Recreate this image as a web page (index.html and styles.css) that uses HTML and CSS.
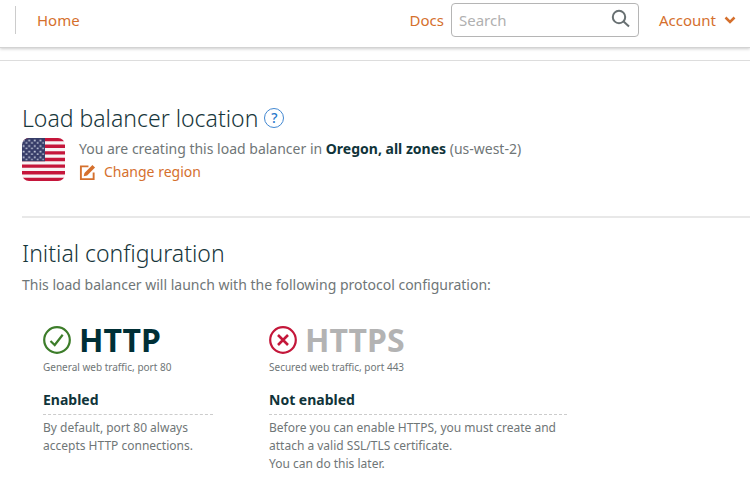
FILE: index.html
```html
<!DOCTYPE html>
<html lang="en">
<head>
<meta charset="utf-8">
<title>Create a load balancer</title>
<link rel="stylesheet" href="styles.css">
</head>
<body>
<header class="topbar">
  <nav class="nav-main"><a href="#">Home</a></nav>
  <nav class="nav-tools">
    <a href="#">Docs</a>
    <div class="search">
      <input type="search" placeholder="Search" aria-label="Search">
      <svg class="search-icon" viewBox="0 0 20 20" aria-hidden="true"><circle cx="8" cy="8" r="6.2"/><path d="M12.6 12.6 18 17.6"/></svg>
    </div>
    <button class="account" type="button">Account
      <svg class="chevron" viewBox="0 0 12 8" aria-hidden="true"><path d="M1.5 1.5 6 6l4.500-4.500"/></svg>
    </button>
  </nav>
</header>
<main class="page">
  <section class="location">
    <div class="heading">
      <h2>Load balancer location</h2>
      <button class="help" type="button" aria-label="Help">?</button>
    </div>
    <div class="region">
      <svg class="flag" viewBox="0 0 43 43" role="img" aria-label="United States">
        <defs>
          <clipPath id="round"><rect width="43" height="43" rx="7"/></clipPath>
          <pattern id="stars" width="5.600" height="5.600" patternUnits="userSpaceOnUse"><path fill="#c9cfdf" d="M.7 1.600h1.800v1.600H.7zM3.500 4.100h1.800v1.500H3.500z"/></pattern>
        </defs>
        <g clip-path="url(#round)">
          <path fill="#f7f4f5" d="M0 0h43v43H0z"/>
          <path stroke="#c5163b" stroke-width="3.308" d="M0 1.650h43M0 8.270h43M0 14.880h43M0 21.500h43M0 28.120h43M0 34.730h43M0 41.350h43"/>
          <path fill="#363c68" d="M0 0h23v23.200H0z"/>
          <path fill="url(#stars)" d="M0 0h22.400v22.400H0z"/>
        </g>
      </svg>
      <div class="region-text">
        <p>You are creating this load balancer in <strong>Oregon, all zones</strong> (us-west-2)</p>
        <a class="change" href="#">
          <svg class="edit-icon" viewBox="0 0 18 18" aria-hidden="true"><path d="M10 2.500H2v13.500h13.500V9"/><path class="pencil" d="m5 13 .8-3.600L14.200 1 17 3.800 8.600 12.200z"/></svg>
          Change region
        </a>
      </div>
    </div>
  </section>
  <section class="config">
    <h2>Initial configuration</h2>
    <p>This load balancer will launch with the following protocol configuration:</p>
    <div class="protocols">
      <article class="protocol protocol-http">
        <h3><svg class="status status-on" viewBox="0 0 28 28" aria-hidden="true"><circle cx="14" cy="14" r="12.800"/><path d="m7.500 15 4.200 4 8-10.200"/></svg>HTTP</h3>
        <p class="caption">General web traffic, port 80</p>
        <h4>Enabled</h4>
        <p class="detail">By default, port 80 always<br>accepts HTTP connections.</p>
      </article>
      <article class="protocol protocol-https">
        <h3 class="muted"><svg class="status status-off" viewBox="0 0 28 28" aria-hidden="true"><circle cx="14" cy="14" r="12.800"/><path d="m9 9 10 10m0-10-10 10"/></svg>HTTPS</h3>
        <p class="caption">Secured web traffic, port 443</p>
        <h4>Not enabled</h4>
        <p class="detail">Before you can enable HTTPS, you must create and<br>attach a valid SSL/TLS certificate.<br>You can do this later.</p>
      </article>
    </div>
  </section>
</main>
</body>
</html>
```
FILE: styles.css
```css
* { box-sizing: border-box; }
body {
  margin: 0;
  background: #fff;
  color: #6f7677;
  font: 14px/20px "Noto Sans", "Open Sans", sans-serif;
}
h2, h3, h4, p { margin: 0; }
a { color: #d5702d; text-decoration: none; }
button { padding: 0; border: 0; background: none; font: inherit; cursor: pointer; }
svg { display: block; flex: none; fill: none; }

.topbar {
  display: flex;
  align-items: center;
  justify-content: space-between;
  height: 48px;
  padding: 0 14px 8px 15px;
  border-bottom: 1px solid #d3d3d3;
  box-shadow: 0 1px 3px #ccc;
  font-size: 15px;
}
.nav-main { padding: 4px 0 4px 21px; border-left: 1px solid #ccc; }
.nav-tools { display: flex; align-items: center; gap: 7px; }
.search { position: relative; width: 188px; }
.search input {
  display: block;
  width: 100%;
  height: 34px;
  padding: 0 36px 0 7px;
  border: 1px solid #b5b5b5;
  border-radius: 4px;
  background: #fff;
  font: inherit;
  appearance: none;
}
.search input::placeholder { color: #b0b0b0; opacity: 1; }
.search-icon { position: absolute; top: 6px; right: 8px; width: 20px; height: 20px; stroke: #687072; stroke-width: 2; }
.account { display: flex; align-items: center; gap: 8px; margin-left: 13px; color: #d5702d; }
.chevron { width: 12px; height: 8px; stroke: #d5702d; stroke-width: 2.500; }

.page { margin-top: 12px; padding: 41px 0 24px 22px; border-top: 1px solid #ddd; }
h2 { color: #17363b; font-size: 23px; line-height: 32px; font-weight: 300; }
.heading { display: flex; align-items: center; gap: 6px; }
.help { width: 20px; height: 20px; border: 1px solid #4187d1; border-radius: 50%; color: #2878cb; font-size: 14px; line-height: 18px; font-weight: 500; }
.location { padding-bottom: 34px; border-bottom: 2px solid #e8e8e8; }
.region { display: flex; gap: 14px; margin-top: 4px; }
.flag { width: 43px; height: 43px; }
.region-text { display: grid; gap: 3px; padding-top: 1px; }
strong, h4 { color: #10343a; font-weight: 700; }
.change { display: flex; align-items: center; gap: 8px; }
.edit-icon { width: 17px; height: 17px; stroke: #d5702d; stroke-width: 2; }
.pencil { fill: #d5702d; stroke: none; }
.config { padding-top: 19px; }
.config > p { margin-top: 6px; }
.protocols { display: flex; gap: 56px; padding: 27px 21px 0; }
.protocol-http { flex: 0 0 170px; }
.protocol-https { flex: 0 1 298px; }
h3 { display: flex; align-items: center; gap: 8px; color: #002f36; font-size: 32px; line-height: 36px; font-weight: 700; }
.muted { color: #b3b3b3; }
.status { width: 28px; height: 28px; stroke-width: 2.200; }
.status-on { stroke: #3d7d2a; }
.status-off { stroke: #c4173a; }
.status-off path { stroke-width: 2.600; }
.caption { font-size: 10px; line-height: 18px; }
h4 { margin-top: 14px; padding-bottom: 4px; border-bottom: 1px dashed #ccc; font-size: 14px; line-height: 20px; }
.detail { margin-top: 4px; font-size: 12px; line-height: 18px; }
```
